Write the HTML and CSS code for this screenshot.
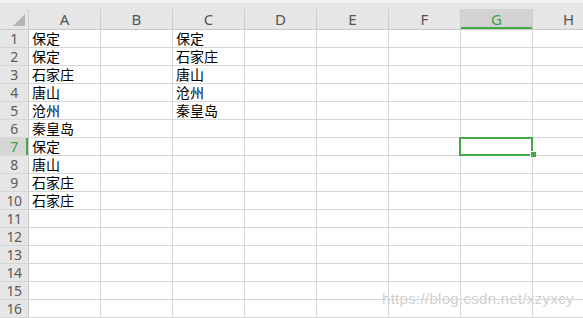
FILE: index.html
```html
<!DOCTYPE html>
<html lang="zh-CN">
<head>
    <meta charset="UTF-8">
    <title>Sheet1</title>
    <link rel="stylesheet" href="styles.css">
</head>
<body>
<div class="sheet">
    <div class="head">
        <div class="corner"><svg width="12" height="12" viewBox="0 0 12 12"><polygon points="12,0 12,12 0,12" fill="#b5b5b5"/></svg></div>
        <div class="col">A</div>
        <div class="col">B</div>
        <div class="col">C</div>
        <div class="col">D</div>
        <div class="col">E</div>
        <div class="col">F</div>
        <div class="col active">G</div>
        <div class="col">H</div>
    </div>
    <div class="row"><div class="num">1</div><div class="cell">保定</div><div class="cell"></div><div class="cell">保定</div><div class="cell"></div><div class="cell"></div><div class="cell"></div><div class="cell"></div><div class="cell"></div></div>
    <div class="row"><div class="num">2</div><div class="cell">保定</div><div class="cell"></div><div class="cell">石家庄</div><div class="cell"></div><div class="cell"></div><div class="cell"></div><div class="cell"></div><div class="cell"></div></div>
    <div class="row"><div class="num">3</div><div class="cell">石家庄</div><div class="cell"></div><div class="cell">唐山</div><div class="cell"></div><div class="cell"></div><div class="cell"></div><div class="cell"></div><div class="cell"></div></div>
    <div class="row"><div class="num">4</div><div class="cell">唐山</div><div class="cell"></div><div class="cell">沧州</div><div class="cell"></div><div class="cell"></div><div class="cell"></div><div class="cell"></div><div class="cell"></div></div>
    <div class="row"><div class="num">5</div><div class="cell">沧州</div><div class="cell"></div><div class="cell">秦皇岛</div><div class="cell"></div><div class="cell"></div><div class="cell"></div><div class="cell"></div><div class="cell"></div></div>
    <div class="row"><div class="num">6</div><div class="cell">秦皇岛</div><div class="cell"></div><div class="cell"></div><div class="cell"></div><div class="cell"></div><div class="cell"></div><div class="cell"></div><div class="cell"></div></div>
    <div class="row"><div class="num active">7</div><div class="cell">保定</div><div class="cell"></div><div class="cell"></div><div class="cell"></div><div class="cell"></div><div class="cell"></div><div class="cell selected"><span class="handle"></span></div><div class="cell"></div></div>
    <div class="row"><div class="num">8</div><div class="cell">唐山</div><div class="cell"></div><div class="cell"></div><div class="cell"></div><div class="cell"></div><div class="cell"></div><div class="cell"></div><div class="cell"></div></div>
    <div class="row"><div class="num">9</div><div class="cell">石家庄</div><div class="cell"></div><div class="cell"></div><div class="cell"></div><div class="cell"></div><div class="cell"></div><div class="cell"></div><div class="cell"></div></div>
    <div class="row"><div class="num">10</div><div class="cell">石家庄</div><div class="cell"></div><div class="cell"></div><div class="cell"></div><div class="cell"></div><div class="cell"></div><div class="cell"></div><div class="cell"></div></div>
    <div class="row"><div class="num">11</div><div class="cell"></div><div class="cell"></div><div class="cell"></div><div class="cell"></div><div class="cell"></div><div class="cell"></div><div class="cell"></div><div class="cell"></div></div>
    <div class="row"><div class="num">12</div><div class="cell"></div><div class="cell"></div><div class="cell"></div><div class="cell"></div><div class="cell"></div><div class="cell"></div><div class="cell"></div><div class="cell"></div></div>
    <div class="row"><div class="num">13</div><div class="cell"></div><div class="cell"></div><div class="cell"></div><div class="cell"></div><div class="cell"></div><div class="cell"></div><div class="cell"></div><div class="cell"></div></div>
    <div class="row"><div class="num">14</div><div class="cell"></div><div class="cell"></div><div class="cell"></div><div class="cell"></div><div class="cell"></div><div class="cell"></div><div class="cell"></div><div class="cell"></div></div>
    <div class="row"><div class="num">15</div><div class="cell"></div><div class="cell"></div><div class="cell"></div><div class="cell"></div><div class="cell"></div><div class="cell"></div><div class="cell"></div><div class="cell"></div></div>
    <div class="row"><div class="num">16</div><div class="cell"></div><div class="cell"></div><div class="cell"></div><div class="cell"></div><div class="cell"></div><div class="cell"></div><div class="cell"></div><div class="cell"></div></div>
    <div class="watermark">https://blog.csdn.net/xzyxcy</div>
</div>
</body>
</html>
```

FILE: styles.css
```css
body {
    margin: 0;
    background: #fff;
    overflow: hidden;
}

.sheet {
    position: relative;
    width: 583px;
    height: 318px;
    overflow: hidden;
    font-family: "Noto Sans", "Open Sans", sans-serif;
}

.head,
.row {
    display: grid;
    grid-template-columns: 29px repeat(8, 72px);
}

.head {
    box-sizing: border-box;
    height: 30px;
    background: #e6e6e6;
    border-top: 3px solid #f2f2f2;
    border-bottom: 1px solid #c9c9c9;
    align-items: end;
}

.corner,
.col {
    box-sizing: border-box;
    height: 20px;
    border-right: 1px solid #cdcdcd;
}

.corner {
    display: flex;
    justify-content: flex-end;
    align-items: flex-end;
    padding: 0 3px 3px 0;
}

.col {
    text-align: center;
    font-size: 15px;
    line-height: 20px;
    color: #555;
}

.col.active {
    background: #d3d3d3;
    color: #3e9e44;
    box-shadow: inset 0 -2px 0 #45a849;
}

.row {
    height: 18px;
}

.num,
.cell {
    box-sizing: border-box;
    height: 18px;
    border-right: 1px solid #d6d6d6;
    border-bottom: 1px solid #d6d6d6;
}

.num {
    background: #e6e6e6;
    border-right-color: #c9c9c9;
    text-align: center;
    font-size: 14px;
    line-height: 17px;
    letter-spacing: -0.5px;
    color: #5b5b5b;
}

.num.active {
    background: #d6d6d6;
    color: #3e9e44;
    box-shadow: inset -2px 0 0 #45a849;
}

.cell {
    padding-left: 3px;
    font-family: "Noto Sans CJK SC", "Noto Sans", sans-serif;
    font-size: 14px;
    line-height: 17px;
    color: #000;
    white-space: nowrap;
}

.cell.selected {
    position: relative;
}

.cell.selected::before {
    content: "";
    position: absolute;
    left: -2px;
    top: -1px;
    width: 74px;
    height: 19px;
    box-sizing: border-box;
    border: 2px solid #45a849;
}

.handle {
    position: absolute;
    right: -4px;
    bottom: -2px;
    width: 5px;
    height: 5px;
    background: #45a849;
    border: 1px solid #fff;
    border-width: 1px 0 0 1px;
}

.watermark {
    position: absolute;
    left: 382px;
    top: 290px;
    font-family: "Liberation Sans", sans-serif;
    font-size: 15px;
    letter-spacing: 0.3px;
    color: rgba(190, 190, 190, 0.75);
    text-shadow: 0 0 1px #fff;
}
```
